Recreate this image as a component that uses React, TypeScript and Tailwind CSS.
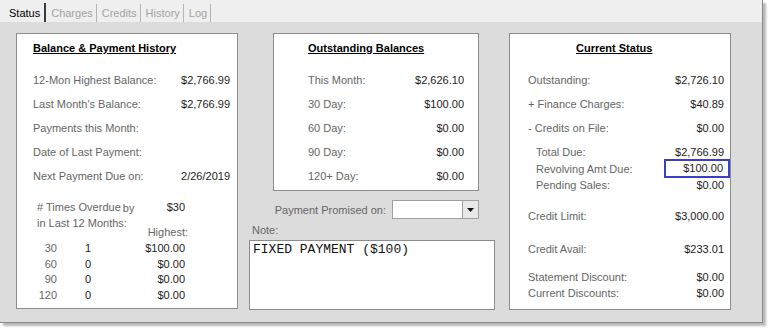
import React from 'react';

const labelCls = 'text-[#666666]';
const valueCls = 'text-[#1c1c1c]';

const Row = ({ label, value, h = 'h-6', indent = false }: { label: string; value?: string; h?: string; indent?: boolean }) => (
  <div className={`flex items-center justify-between ${h}`}>
    <span className={`${labelCls} ${indent ? 'pl-2' : ''}`}>{label}</span>
    {value && <span className={valueCls}>{value}</span>}
  </div>
);

const App = () => {
  const tabs = ['Charges', 'Credits', 'History', 'Log'];
  const overdue = [
    { days: '30', count: '1', high: '$100.00' },
    { days: '60', count: '0', high: '$0.00' },
    { days: '90', count: '0', high: '$0.00' },
    { days: '120', count: '0', high: '$0.00' },
  ];

  return (
    <div className="w-[771px] h-[331px] bg-white font-['Liberation_Sans',Arial,sans-serif] text-[11px] leading-4">
      <div className="w-[763px] h-[323px] bg-[#dcdcdc] border-r border-b border-[#8a8a8a] shadow-[3px_3px_2px_rgba(0,0,0,0.28)] flex flex-col">
        {/* Tabs */}
        <div className="h-[22px] bg-[#efefef] flex items-stretch pl-[9px] pt-[3px] text-[11px]">
          <div className="flex items-center pr-[4px] border-r-2 border-[#3a3a3a] text-black">Status</div>
          {tabs.map((t) => (
            <div key={t} className="flex items-center pl-[5px] pr-[3px] border-r border-[#b4b4b4] text-[#a3a3a3] mt-px">
              {t}
            </div>
          ))}
        </div>

        {/* Content */}
        <div className="flex pl-4 pt-[11px]">
          {/* Balance & Payment History */}
          <div className="w-[222px] h-[276px] border border-[#8c8c8c] bg-white pl-4 pr-[7px] pt-[6px]">
            <div className="font-bold underline text-black h-4">Balance &amp; Payment History</div>
            <div className="mt-3">
              <Row label="12-Mon Highest Balance:" value="$2,766.99" />
              <Row label="Last Month's Balance:" value="$2,766.99" />
              <Row label="Payments this Month:" />
              <Row label="Date of Last Payment:" />
              <Row label="Next Payment Due on:" value="2/26/2019" />
            </div>
            <div className="mt-[11px] w-[152px]">
              <div className="flex items-center h-4">
                <span className={`${labelCls} pl-1`}># Times Overdue</span>
                <span className={`${labelCls} ml-[2px] translate-y-px`}>by</span>
                <span className={`${valueCls} flex-1 text-right`}>$30</span>
              </div>
              <div className="flex justify-between">
                <span className={`${labelCls} pl-1 h-4`}>in Last 12 Months:</span>
                <span className={`${labelCls} mt-[9px] -mr-[3px] h-4`}>Highest:</span>
              </div>
              {overdue.map((o) => (
                <div key={o.days} className="flex items-center h-[15.7px]">
                  <span className={`${labelCls} w-6 text-right`}>{o.days}</span>
                  <span className={`${valueCls} ml-7`}>{o.count}</span>
                  <span className={`${valueCls} flex-1 text-right`}>{o.high}</span>
                </div>
              ))}
            </div>
          </div>

          {/* Middle column */}
          <div className="ml-[11px] w-[246px] flex flex-col">
            <div className="ml-6 w-[206px] h-[158px] border border-[#8c8c8c] bg-white pl-[34px] pr-[14px] pt-[6px]">
              <div className="font-bold underline text-black h-4">Outstanding Balances</div>
              <div className="mt-3">
                <Row label="This Month:" value="$2,626.10" />
                <Row label="30 Day:" value="$100.00" />
                <Row label="60 Day:" value="$0.00" />
                <Row label="90 Day:" value="$0.00" />
                <Row label="120+ Day:" value="$0.00" />
              </div>
            </div>
            <div className="ml-6 w-[206px] mt-[9px] flex items-center justify-end gap-[6px]">
              <span className={labelCls}>Payment Promised on:</span>
              <div className="w-[87px] h-[19px] border border-[#a0a0a0] bg-white flex justify-end">
                <div className="w-4 h-full border-l border-[#a0a0a0] bg-[#e8e8e8] flex items-center justify-center">
                  <svg width="7" height="4" viewBox="0 0 7 4">
                    <path d="M0 0H7L3.5 4Z" fill="#111" />
                  </svg>
                </div>
              </div>
            </div>
            <div className={`${labelCls} mt-[3px] pl-[3px] h-4`}>Note:</div>
            <div className="mt-[2px] w-[246px] h-[70px] border border-[#8c8c8c] bg-white px-[3px] pt-px font-['Liberation_Mono','Courier_New',monospace] text-[13px] leading-[15px] text-[#111111]">
              FIXED PAYMENT ($100)
            </div>
          </div>

          {/* Current Status */}
          <div className="ml-[14px] w-[222px] h-[277px] border border-[#8c8c8c] bg-white pl-[18px] pr-[6px] pt-[6px]">
            <div className="font-bold underline text-black h-4 ml-[48px]">Current Status</div>
            <div className="mt-3">
              <Row label="Outstanding:" value="$2,726.10" />
              <Row label="+ Finance Charges:" value="$40.89" />
              <Row label="- Credits on File:" value="$0.00" />
            </div>
            <div className="mt-1">
              <Row label="Total Due:" value="$2,766.99" h="h-[16.5px]" indent />
              <div className="flex items-center justify-between h-[16.5px]">
                <span className={`${labelCls} pl-2`}>Revolving Amt Due:</span>
                <span className={`${valueCls} w-[66px] h-[19px] -mr-[6px] border-2 border-[#3b3fc4] text-right pr-[5px] leading-[15px]`}>
                  $100.00
                </span>
              </div>
              <Row label="Pending Sales:" value="$0.00" h="h-[16.5px]" indent />
            </div>
            <div className="mt-[10px]">
              <Row label="Credit Limit:" value="$3,000.00" />
            </div>
            <div className="mt-[9px]">
              <Row label="Credit Avail:" value="$233.01" />
            </div>
            <div className="mt-[8.5px]">
              <Row label="Statement Discount:" value="$0.00" h="h-4" />
              <Row label="Current Discounts:" value="$0.00" h="h-4" />
            </div>
          </div>
        </div>
      </div>
    </div>
  );
};

export default App;
